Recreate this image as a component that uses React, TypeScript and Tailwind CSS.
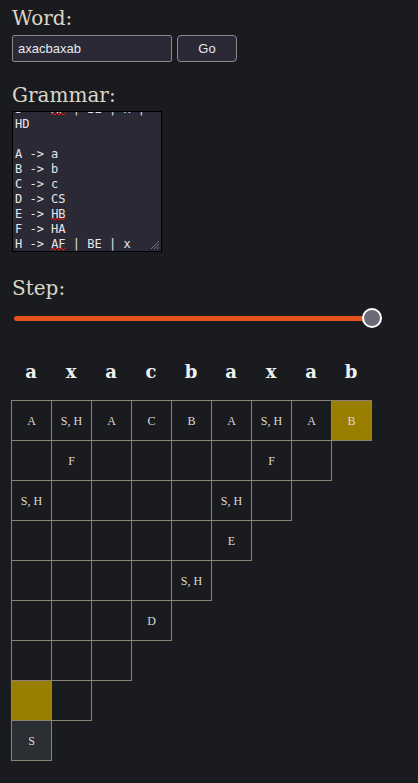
import React from "react";

const word = "axacbaxab".split("");
const table: string[][] = [
  ["A", "S, H", "A", "C", "B", "A", "S, H", "A", "B"],
  ["", "F", "", "", "", "", "F", ""],
  ["S, H", "", "", "", "", "S, H", ""],
  ["", "", "", "", "", "E"],
  ["", "", "", "", "S, H"],
  ["", "", "", "D"],
  ["", "", ""],
  ["", ""],
  ["S"],
];

function cellBg(r: number, c: number) {
  if ((r === 0 && c === 8) || (r === 7 && c === 0)) return "bg-[#9a7e00]";
  if (r === 8 && c === 0) return "bg-[#2b2e33]";
  return "bg-transparent";
}

const W = ({ children }: { children: React.ReactNode }) => (
  <span className="relative">
    {children}
    <svg className="absolute bottom-0 left-0" width="15" height="4" viewBox="0 0 15 4">
      <polyline points="0,3 2,1 4,3 6,1 8,3 10,1 12,3 14,1" fill="none" stroke="#ff1010" strokeWidth="1" />
    </svg>
  </span>
);

export default function App() {
  return (
    <div className="min-h-[783px] w-[418px] bg-[#1a1b1e] px-3 pt-[6px] text-[#dcd6c8]">
      <div className="text-[20px] leading-[24px] [font-family:'DejaVu_Serif',serif]">Word:</div>
      <div className="mt-[5px] flex gap-[5px]">
        <div className="flex h-[27px] w-[160px] items-center rounded-[2px] border border-[#8b8a90] bg-[#2a2935] pl-[5px] text-[13px] text-[#e8e8ec] [font-family:'Liberation_Sans',sans-serif]">
          axacbaxab
        </div>
        <div className="flex h-[27px] w-[60px] items-center justify-center rounded-[4px] border border-[#8b8a90] bg-[#2a2935] text-[13px] text-[#e8e8ec] [font-family:'Liberation_Sans',sans-serif]">
          Go
        </div>
      </div>

      <div className="mt-[21px] text-[20px] leading-[24px] [font-family:'DejaVu_Serif',serif]">Grammar:</div>
      <div className="relative mt-[4px] h-[141px] w-[150px] overflow-hidden border border-black bg-[#2a2935]">
        <div className="-mt-[10px] whitespace-pre pl-[2px] text-[12px] leading-[15px] text-[#e6e6ea] [font-family:'DejaVu_Sans_Mono',monospace]">
          <div>S -&gt; <W>AF</W> | BE | x |</div>
          <div>HD</div>
          <div> </div>
          <div>A -&gt; a</div>
          <div>B -&gt; b</div>
          <div>C -&gt; c</div>
          <div>D -&gt; CS</div>
          <div>E -&gt; <W>HB</W></div>
          <div>F -&gt; HA</div>
          <div>H -&gt; <W>AF</W> | BE | x</div>
        </div>
        <svg className="absolute bottom-[1px] right-[1px]" width="11" height="11" viewBox="0 0 11 11">
          <g stroke="#6f6e78" strokeWidth="1">
            <line x1="10" y1="2" x2="2" y2="10" />
            <line x1="10" y1="5" x2="5" y2="10" />
            <line x1="10" y1="8" x2="8" y2="10" />
          </g>
        </svg>
      </div>

      <div className="mt-[24px] text-[20px] leading-[24px] [font-family:'DejaVu_Serif',serif]">Step:</div>
      <div className="relative mt-[8px] h-[20px] w-[370px]">
        <div className="absolute left-[2px] right-[10px] top-[8px] h-[5px] rounded-full bg-[#e5531c]" />
        <div className="absolute right-0 top-0 h-[20px] w-[20px] rounded-full border-2 border-white bg-[#6b6a76]" />
      </div>

      <div className="mt-[32px] -ml-px flex">
        {word.map((ch, i) => (
          <div
            key={i}
            className="w-[40px] text-center text-[18px] font-bold leading-[24px] text-[#f0f0f0] [font-family:'DejaVu_Serif',serif]"
          >
            {ch}
          </div>
        ))}
      </div>

      <div className="mt-[16px] -ml-px flex flex-col">
        {table.map((row, r) => (
          <div key={r} className="-mb-px flex">
            {row.map((v, c) => (
              <div
                key={c}
                className={`-mr-px flex h-[41px] w-[41px] items-center justify-center border border-[#8a8275] text-[12px] text-[#dcdcdc] [font-family:'Liberation_Serif',serif] ${cellBg(r, c)}`}
              >
                {v}
              </div>
            ))}
          </div>
        ))}
      </div>
    </div>
  );
}
